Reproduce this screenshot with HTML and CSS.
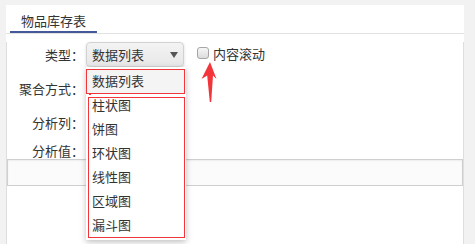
FILE: index.html
```html
<!DOCTYPE html>
<html lang="zh-CN">
<head>
    <meta charset="UTF-8">
    <title>物品库存表</title>
    <link rel="stylesheet" href="styles.css">
</head>
<body>
    <div class="panel">
        <div class="tab-bar">
            <div class="tab active">物品库存表</div>
        </div>
        <div class="tab-body">
            <div class="form-row row-type">
                <label class="form-label">类型：</label>
                <div class="select-wrap">
                    <div class="select">
                        <span>数据列表</span>
                        <i class="select-arrow"></i>
                    </div>
                    <ul class="dropdown">
                        <li class="selected">数据列表</li>
                        <li>柱状图</li>
                        <li>饼图</li>
                        <li>环状图</li>
                        <li>线性图</li>
                        <li>区域图</li>
                        <li>漏斗图</li>
                    </ul>
                    <!-- 标注 -->
                    <div class="mark mark-first"></div>
                    <div class="mark-dot"></div>
                    <div class="mark mark-rest"></div>
                    <svg class="mark-arrow" width="20" height="46" viewBox="0 0 20 46">
                        <polygon points="12,4 18.5,21 15,17.5 13.2,44 11.8,44 9.2,17.5 3.5,21" fill="#f2353b"/>
                    </svg>
                </div>
                <label class="check">
                    <span class="check-box"></span>
                    <span>内容滚动</span>
                </label>
            </div>
            <div class="form-row row-agg">
                <label class="form-label">聚合方式：</label>
            </div>
            <div class="form-row row-col">
                <label class="form-label">分析列：</label>
            </div>
            <div class="form-row row-val">
                <label class="form-label">分析值：</label>
            </div>
            <div class="value-box"></div>
        </div>
    </div>
</body>
</html>
```

FILE: styles.css
```css
body {
    margin: 0;
    padding: 5px 0 0 6px;
    background-color: #f2f2f2;
    font-family: "Microsoft YaHei", "Noto Sans CJK SC", sans-serif;
    font-size: 13px;
    color: #333;
}
.panel {
    width: 458px;
    background: white;
}
.tab-bar {
    display: flex;
    height: 28px;
    border-bottom: 1px solid #e2e2e2;
}
.tab {
    position: relative;
    z-index: 1;
    margin-left: 4px;
    padding: 3px 11px 0 11px;
    line-height: 25px;
    border-bottom: 2px solid #44589a;
}
.tab-body {
    height: 207px;
    border: 1px solid #dedede;
    border-top: none;
}
.form-row {
    display: flex;
    align-items: center;
    height: 24px;
}
.form-label {
    width: 77px;
    text-align: right;
    margin-right: 2px;
    white-space: nowrap;
}
.row-type {
    height: 25px;
    margin-top: 8px;
}
.row-agg {
    margin-top: 9px;
}
.row-col {
    margin-top: 10px;
}
.row-val {
    margin-top: 8px;
    height: 17px;
}
.select-wrap {
    position: relative;
}
.select {
    display: flex;
    align-items: center;
    justify-content: space-between;
    box-sizing: border-box;
    width: 98px;
    height: 25px;
    padding: 0 5px 0 5px;
    border: 1px solid #d2d2d2;
    border-radius: 4px;
    background: linear-gradient(#f3f3f3, #e8e8e8);
    box-shadow: 0 1px 3px rgba(0,0,0,0.15);
}
.select-arrow {
    width: 0;
    height: 0;
    border-left: 4px solid transparent;
    border-right: 4px solid transparent;
    border-top: 6px solid #555;
}
.dropdown {
    position: absolute;
    z-index: 5;
    top: 25px;
    left: 0;
    width: 100px;
    margin: 0;
    padding: 2px 0 3px 0;
    list-style: none;
    background: white;
    box-shadow: 0 2px 6px rgba(0,0,0,0.25);
}
.dropdown li {
    height: 24px;
    line-height: 24px;
    padding-left: 6px;
}
.dropdown li.selected {
    background-color: #f4f4f4;
}
.mark {
    position: absolute;
    z-index: 6;
    border: 1px solid #f2353b;
}
.mark-first {
    top: 27px;
    left: 0;
    width: 97px;
    height: 23px;
}
.mark-rest {
    top: 55px;
    left: 2px;
    width: 95px;
    height: 139px;
}
.mark-dot {
    position: absolute;
    z-index: 6;
    top: 52px;
    left: 3px;
    width: 2px;
    height: 1px;
    background: #f2353b;
}
.mark-arrow {
    position: absolute;
    z-index: 6;
    top: 16px;
    left: 112px;
}
.check {
    display: flex;
    align-items: center;
    margin-left: 13px;
    margin-top: -3px;
}
.check-box {
    box-sizing: border-box;
    width: 12px;
    height: 12px;
    margin-right: 4px;
    border: 1px solid #a6a6a6;
    border-radius: 3px;
    background: linear-gradient(#f6f6f6, #dcdcdc);
}
.value-box {
    height: 25px;
    border: 1px solid #cfcfcf;
    background-color: #fbfbfb;
    box-shadow: inset 0 1px 2px rgba(0,0,0,0.06);
}
```
